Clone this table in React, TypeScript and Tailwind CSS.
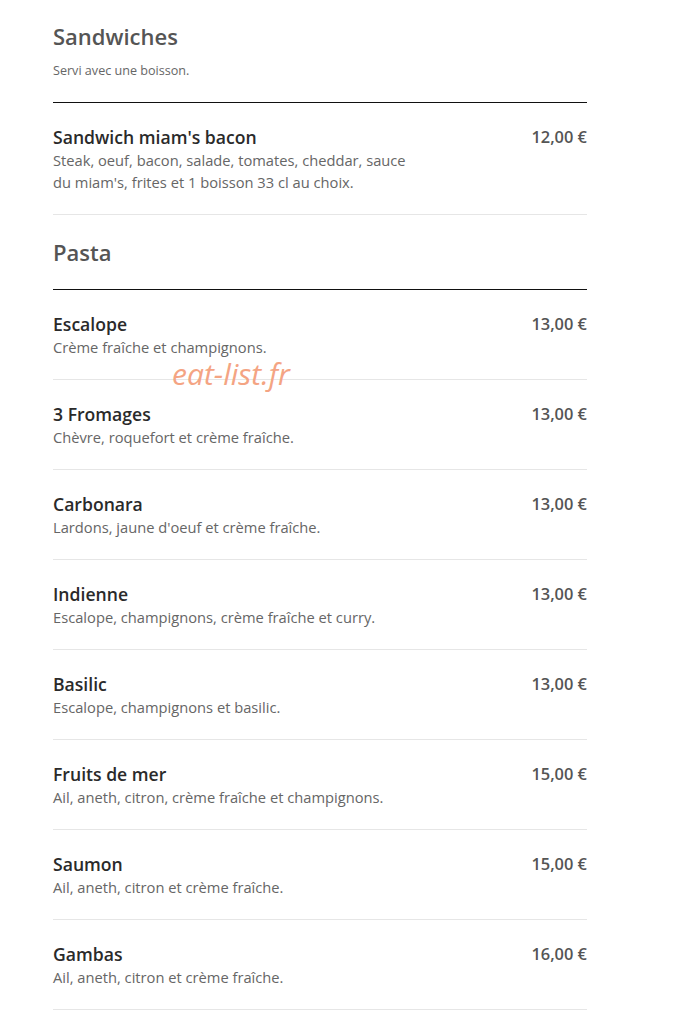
import React from 'react';

type Item = { name: string; desc: string; price: string };

const sandwiches: Item[] = [
  {
    name: "Sandwich miam's bacon",
    desc: "Steak, oeuf, bacon, salade, tomates, cheddar, sauce du miam's, frites et 1 boisson 33 cl au choix.",
    price: '12,00 €',
  },
];

const pasta: Item[] = [
  { name: 'Escalope', desc: 'Crème fraîche et champignons.', price: '13,00 €' },
  { name: '3 Fromages', desc: 'Chèvre, roquefort et crème fraîche.', price: '13,00 €' },
  { name: 'Carbonara', desc: "Lardons, jaune d'oeuf et crème fraîche.", price: '13,00 €' },
  { name: 'Indienne', desc: 'Escalope, champignons, crème fraîche et curry.', price: '13,00 €' },
  { name: 'Basilic', desc: 'Escalope, champignons et basilic.', price: '13,00 €' },
  { name: 'Fruits de mer', desc: 'Ail, aneth, citron, crème fraîche et champignons.', price: '15,00 €' },
  { name: 'Saumon', desc: 'Ail, aneth, citron et crème fraîche.', price: '15,00 €' },
  { name: 'Gambas', desc: 'Ail, aneth, citron et crème fraîche.', price: '16,00 €' },
];

function MenuRow({ item }: { item: Item }) {
  return (
    <div className="flex justify-between items-start pt-[22px] pb-[21px] border-b border-[#e6e6e6]">
      <div className="w-[362px]">
        <p className="text-[17.6px] leading-[24px] font-semibold text-[#2a2a2a]">{item.name}</p>
        <p className="text-[14.7px] leading-[22px] text-[#666]">{item.desc}</p>
      </div>
      <p className="text-[16.4px] leading-[24px] font-semibold text-[#555]">{item.price}</p>
    </div>
  );
}

export default function App() {
  return (
    <div className="relative bg-white min-h-[1018px] pl-[53px] pr-[87px] pt-[21px]" style={{ fontFamily: '"Open Sans", "Noto Sans", sans-serif' }}>
      {/* Sandwiches */}
      <section>
        <h2 className="text-[22px] leading-[30px] font-semibold text-[#555]">Sandwiches</h2>
        <p className="mt-[11px] text-[12.6px] leading-[18px] text-[#666]">Servi avec une boisson.</p>
        <div className="mt-[22px] border-t border-[#111]" />
        {sandwiches.map((it) => (
          <MenuRow key={it.name} item={it} />
        ))}
      </section>

      {/* Pasta */}
      <section className="mt-[22px]">
        <h2 className="text-[22px] leading-[30px] font-semibold text-[#555]">Pasta</h2>
        <div className="mt-[22px] border-t border-[#111]" />
        {pasta.map((it) => (
          <MenuRow key={it.name} item={it} />
        ))}
      </section>

      {/* watermark */}
      <div className="absolute left-[172px] top-[355px] text-[30px] leading-[38px] italic text-[#f4a483] pointer-events-none">
        eat-list.fr
      </div>
    </div>
  );
}
